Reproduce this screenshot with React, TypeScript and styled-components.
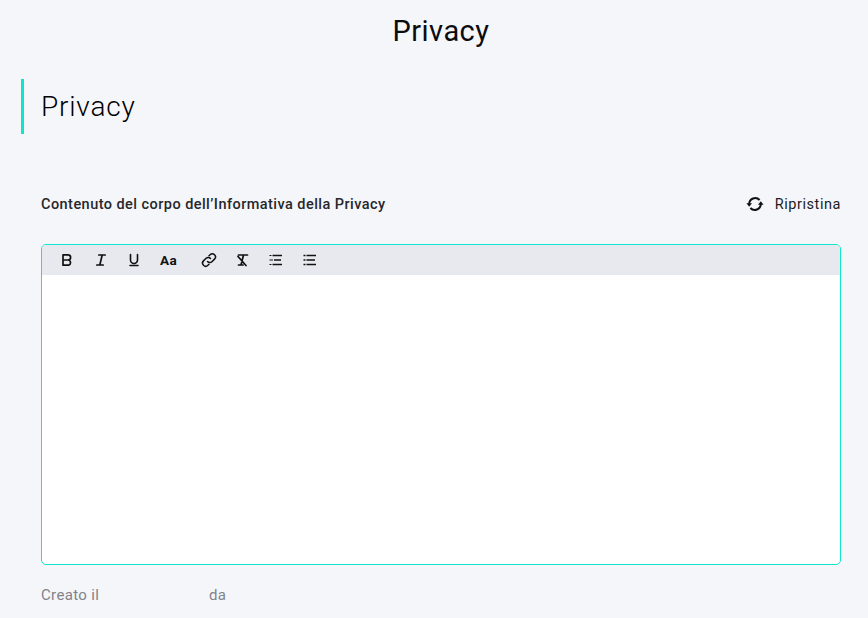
import React from "react";
import styled, { createGlobalStyle } from "styled-components";

const Global = createGlobalStyle`
  html, body { margin: 0; padding: 0; background: #f5f6fa; overflow: hidden; }
  body { font-family: Roboto, "Liberation Sans", sans-serif; color: #101114; }
`;
const Page = styled.div`
  width: 868px; height: 618px; box-sizing: border-box; overflow: hidden;
  display: flex; flex-direction: column; background: #f5f6fa;
`;
const PageTitle = styled.h1`
  margin: 0; height: 62px; padding-left: 14px; display: flex; align-items: center; justify-content: center;
  font-size: 29px; font-weight: 400; letter-spacing: 0.45px; color: #0b0c0e;
`;
const Section = styled.div`
  margin: 17px 0 0 21px; height: 55px; border-left: 3px solid #14e2c8;
  padding-left: 17px; display: flex; align-items: center;
`;
const SectionTitle = styled.h2`
  margin: 0; font-size: 28px; font-weight: 300; letter-spacing: 0.8px; color: #000;
`;
const Content = styled.div`
  padding: 0 27px 0 41px; display: flex; flex-direction: column;
`;
const LabelRow = styled.div`
  margin-top: 58px; height: 24px; display: flex; align-items: center; justify-content: space-between;
`;
const Label = styled.span`
  font-size: 14.5px; font-weight: 500; letter-spacing: 0.45px; color: #26272b;
`;
const Reset = styled.button`
  border: 0; background: none; padding: 0; display: flex; align-items: center; gap: 11px;
  font: 400 14.5px Roboto, sans-serif; letter-spacing: 0.55px; color: #1c1d21;
`;
const Editor = styled.div`
  margin-top: 28px; height: 321px; box-sizing: border-box; border: 1px solid #0de8cc; border-radius: 5px;
  background: #fff; overflow: hidden; display: flex; flex-direction: column;
`;
const Toolbar = styled.div`
  height: 30px; background: #e8e9ef; display: flex; align-items: center; padding-left: 16px;
`;
const Tool = styled.span<{ $w: number }>`
  width: ${p => p.$w}px; display: flex; align-items: center;
  font-size: 13.5px; font-weight: 700; color: #111;
`;
const AaTool = styled(Tool)`
  padding-left: 2px; box-sizing: border-box; letter-spacing: 0.4px;
`;
const Footer = styled.div`
  margin-top: 21px; display: flex; font-size: 15px; letter-spacing: 0.35px; color: #828389;
`;
const Created = styled.span`
  width: 168px;
`;
const Ico = styled.svg`
  display: block; fill: none; stroke: #111; stroke-width: 1.5; stroke-linecap: round; stroke-linejoin: round;
`;

export default function App() {
  return (
    <Page>
      <Global />
      <PageTitle>Privacy</PageTitle>
      <Section><SectionTitle>Privacy</SectionTitle></Section>
      <Content>
        <LabelRow>
          <Label>Contenuto del corpo dell’Informativa della Privacy</Label>
          <Reset>
            <Ico width="18" height="18" viewBox="0 0 18 18" style={{ strokeWidth: 2, strokeLinecap: "butt" }}>
              <path d="M3.2 9A6 6 0 0 1 13.6 5" />
              <path d="M14.8 9A6 6 0 0 1 4.4 13" />
              <path d="M.4 8.2h5.6L3.2 11.8Z M17.6 9.8h-5.6l2.8-3.6Z" fill="#111" stroke="none" />
            </Ico>
            Ripristina
          </Reset>
        </LabelRow>
        <Editor>
          <Toolbar>
            <Tool $w={34}>
              <Ico width="18" height="18" viewBox="0 0 18 18" style={{ strokeWidth: 1.7 }}>
                <path d="M5 3.8h5a2.6 2.6 0 0 1 0 5.2H5Zm0 5.2h5.6a2.7 2.7 0 0 1 0 5.2H5Z" />
              </Ico>
            </Tool>
            <Tool $w={33}>
              <Ico width="18" height="18" viewBox="0 0 18 18" style={{ strokeWidth: 1.7 }}>
                <path d="M6.8 4h6.4M4.8 14h6.4M10.2 4 7.8 14" />
              </Ico>
            </Tool>
            <Tool $w={33}>
              <Ico width="18" height="18" viewBox="0 0 18 18" style={{ strokeWidth: 1.6 }}>
                <path d="M5.5 3.5v5.5a3.5 3.5 0 0 0 7 0V3.5M5 14.5h8" />
              </Ico>
            </Tool>
            <AaTool $w={41}>Aa</AaTool>
            <Tool $w={34}>
              <Ico width="18" height="18" viewBox="0 0 18 18" style={{ transform: "translateX(1px)" }}>
                <path d="M7.5 10.5a3 3 0 0 0 4.4.2l2.6-2.6a3.1 3.1 0 0 0-4.4-4.4L9 4.8" />
                <path d="M10.5 7.5a3 3 0 0 0-4.4-.2L3.5 9.9a3.1 3.1 0 0 0 4.4 4.4L9 13.2" />
              </Ico>
            </Tool>
            <Tool $w={34}>
              <Ico width="18" height="18" viewBox="0 0 18 18" style={{ strokeWidth: 1.7 }}>
                <path d="M5.5 4h9M10.5 4 8 14M5.5 14h4.6M5 5.5l8 9" />
              </Ico>
            </Tool>
            <Tool $w={34}>
              <Ico width="18" height="18" viewBox="0 0 18 18" style={{ strokeLinecap: "butt", strokeWidth: 1.5 }}>
                <path d="M5.5 4.5H15M7 9H14M5.5 13.5H15" />
                <path d="M2.5 4.5h2M2.5 9h3.5M2.5 13.5h2" strokeWidth="1.1" />
              </Ico>
            </Tool>
            <Tool $w={20}>
              <Ico width="18" height="18" viewBox="0 0 18 18" style={{ strokeLinecap: "butt", strokeWidth: 1.6 }}>
                <path d="M5.5 4.5H15M5.5 9H14M5.5 13.5H15M2.5 4.5h2M2.5 9h2M2.5 13.5h2" />
              </Ico>
            </Tool>
          </Toolbar>
        </Editor>
        <Footer>
          <Created>Creato il</Created>
          <span>da</span>
        </Footer>
      </Content>
    </Page>
  );
}
